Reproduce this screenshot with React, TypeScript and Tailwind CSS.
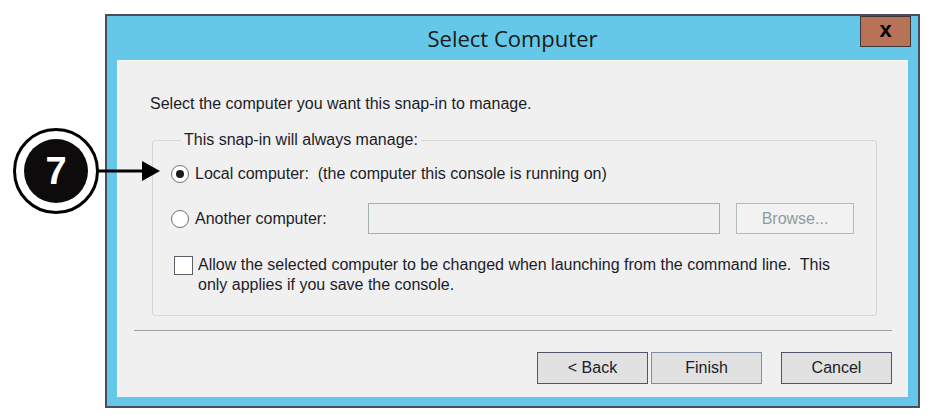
export default function App() {
  return (
    <div className="relative w-[928px] h-[417px] bg-white pt-[14px] pl-[105px] font-['Liberation_Sans',Arial,sans-serif] text-[#1c1c28]">
      {/* dialog window */}
      <div className="w-[815px] h-[394px] border-2 border-[#4b4d5c] bg-[#65c8e8] flex flex-col">
        {/* title bar */}
        <div className="h-[44px] flex items-start">
          <div className="w-[58px]" />
          <div className="flex-1 h-full flex items-center justify-center font-['Open_Sans',sans-serif] text-[22px] text-[#1a1a1a]">
            Select Computer
          </div>
          <button className="w-[51px] h-[31px] mr-[7px] bg-[#b87258] border border-[#3a3a3a] flex items-center justify-center text-[22px] font-bold leading-none text-black pb-[4px]">
            x
          </button>
        </div>

        {/* client area */}
        <div className="flex-1 mx-[10px] mb-[9px] bg-[#f0f0f0] border-t border-l border-[#fafafa] flex flex-col text-[16px]">
          <p className="pt-[33px] pl-[32px] leading-[20px]">
            Select the computer you want this snap-in to manage.
          </p>

          <fieldset className="mt-[16px] ml-[34px] w-[725px] border border-[#d6d6d6] rounded-[3px] pl-[18px] pb-[20px]">
            <legend className="ml-[10px] px-[3px] leading-[20px]">This snap-in will always manage:</legend>

            <div className="mt-[14px] h-[20px] flex items-center">
              <span className="w-[18px] h-[18px] rounded-full border border-[#6f7378] bg-white flex items-center justify-center">
                <span className="w-[8px] h-[8px] rounded-full bg-[#1a1a1a]" />
              </span>
              <span className="ml-[6px] leading-[20px]">Local computer:&nbsp; (the computer this console is running on)</span>
            </div>

            <div className="mt-[19px] flex items-center">
              <div className="w-[197px] flex items-center">
                <span className="w-[18px] h-[18px] rounded-full border border-[#6f7378] bg-white" />
                <span className="ml-[6px] leading-[20px]">Another computer:</span>
              </div>
              <div className="w-[352px] h-[31px] border border-[#a4afb3] bg-[#f0f0f0]" />
              <button className="ml-[16px] w-[118px] h-[31px] border border-[#b1bbbe] bg-[#f2f2f2] text-[#8e9ca0]">
                Browse...
              </button>
            </div>

            <div className="mt-[21px] flex items-start">
              <span className="ml-[3px] mt-[1px] w-[19px] h-[19px] border border-[#5b6068] bg-white shrink-0" />
              <p className="ml-[5px] w-[650px] leading-[20px]">
                Allow the selected computer to be changed when launching from the command line.&nbsp; This only applies if you save the console.
              </p>
            </div>
          </fieldset>

          <div className="mt-[14px] mx-[16px] h-px bg-[#a0a0a0]" />

          <div className="mt-[21px] mr-[16px] flex justify-end">
            <button className="w-[111px] h-[32px] border border-[#4f546a] bg-[#e1e1e1]">&lt; Back</button>
            <button className="ml-[3px] w-[111px] h-[32px] border border-[#7d8ea2] bg-[#e1e1e1]">Finish</button>
            <button className="ml-[19px] w-[111px] h-[32px] border border-[#4f546a] bg-[#e1e1e1]">Cancel</button>
          </div>
        </div>
      </div>

      {/* step callout */}
      <div className="absolute left-[13px] top-[128px] flex items-center">
        <div className="w-[86px] h-[86px] rounded-full border-[3px] border-black bg-white flex items-center justify-center">
          <div className="w-[64px] h-[64px] rounded-full bg-[#0d0b0c] flex items-center justify-center text-white text-[38px] font-bold leading-none">
            7
          </div>
        </div>
        <svg width="62" height="22" viewBox="0 0 62 22" className="-ml-[1px]">
          <path d="M0 11 H46" stroke="#000" strokeWidth="3" />
          <path d="M44 1 L62 11 L44 21 Z" fill="#000" />
        </svg>
      </div>
    </div>
  )
}
